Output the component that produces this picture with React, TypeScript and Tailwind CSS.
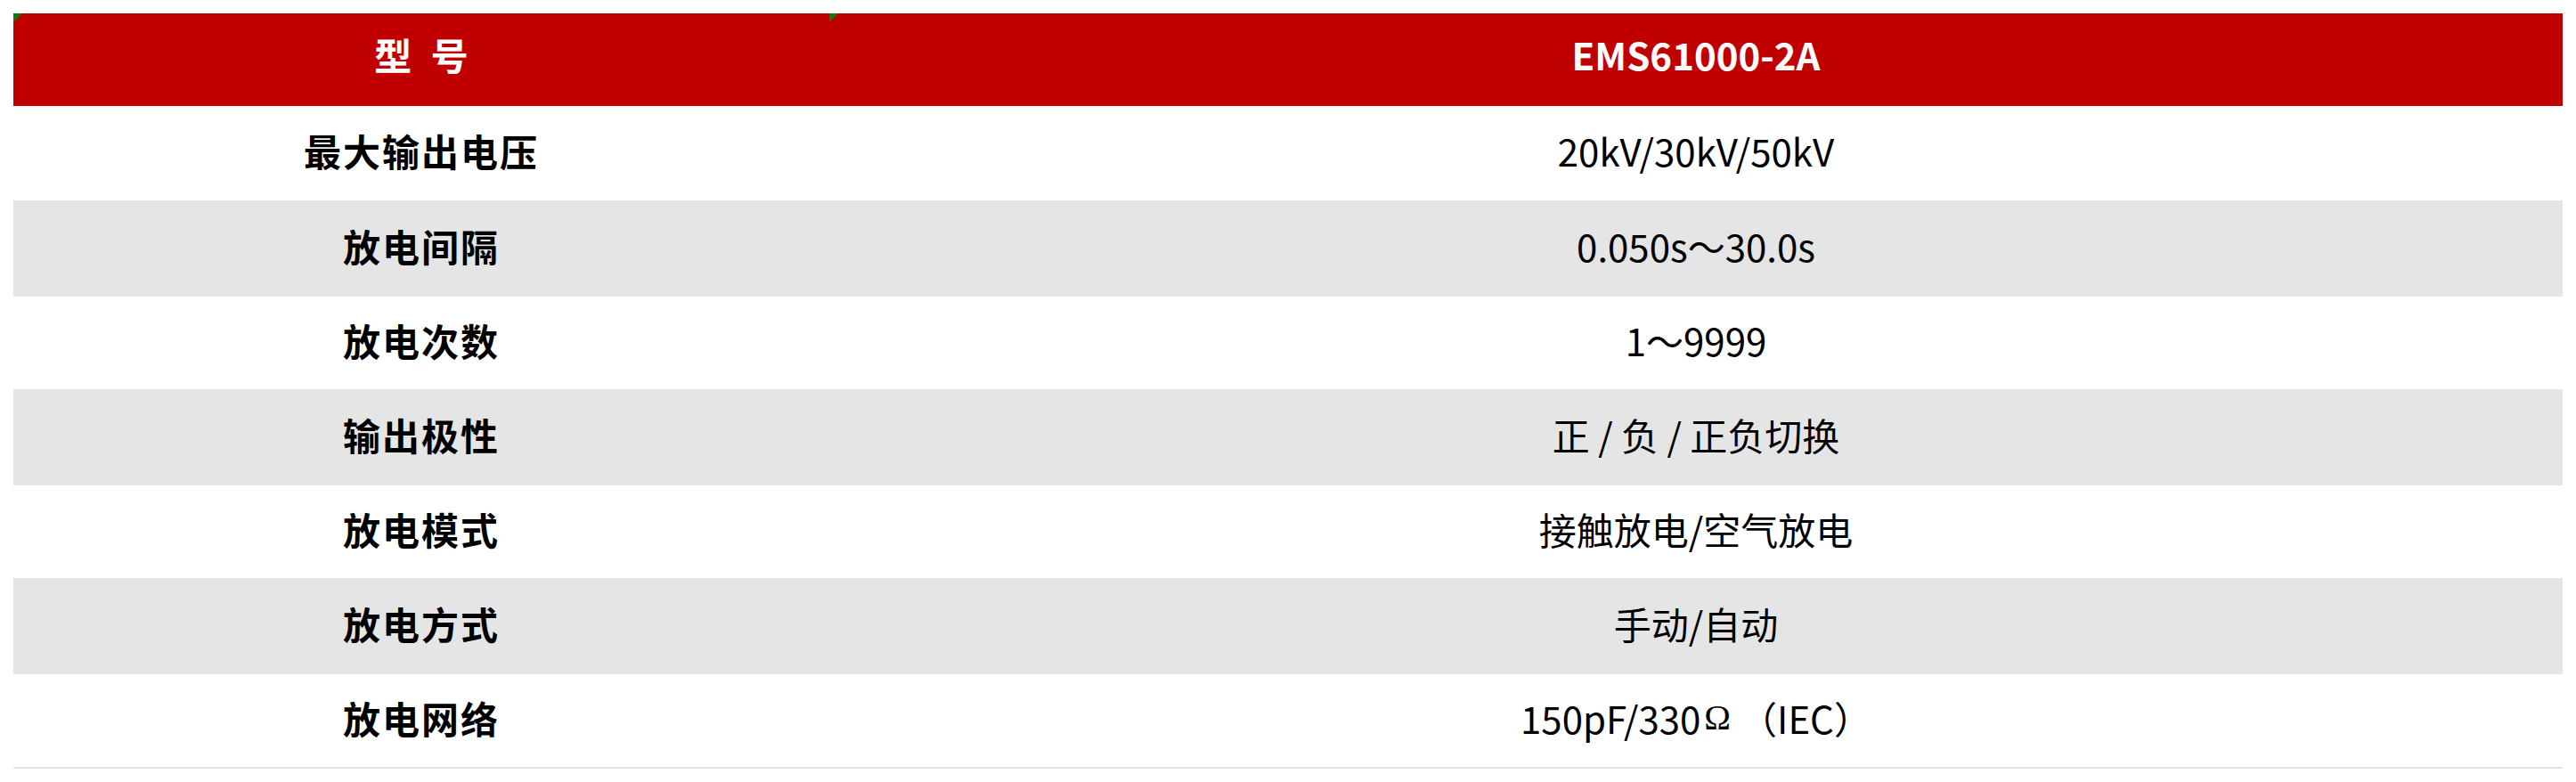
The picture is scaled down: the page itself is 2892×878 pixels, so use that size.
import React from 'react';

const rows: { label: string; value: React.ReactNode; grey: boolean; h: string }[] = [
    { label: '最大输出电压', value: '20kV/30kV/50kV', grey: false, h: 'h-[106px]' },
    { label: '放电间隔', value: '0.050s～30.0s', grey: true, h: 'h-[108px]' },
    { label: '放电次数', value: '1～9999', grey: false, h: 'h-[104px]' },
    { label: '输出极性', value: '正 / 负 / 正负切换', grey: true, h: 'h-[108px]' },
    { label: '放电模式', value: '接触放电/空气放电', grey: false, h: 'h-[104px]' },
    { label: '放电方式', value: '手动/自动', grey: true, h: 'h-[108px]' },
    {
        label: '放电网络',
        value: (
            <>
                150pF/330
                <span className="font-['Liberation_Serif',serif] text-[40px] ml-[4px]">Ω</span>
                <span className="ml-[10px]">（IEC）</span>
            </>
        ),
        grey: false,
        h: 'h-[104px]',
    },
];

function Marker() {
    return (
        <svg className="absolute left-0 top-0" width="10" height="10" viewBox="0 0 10 10">
            <polygon points="0,0 10,0 0,10" fill="#0a7d0a" />
        </svg>
    );
}

export default function App() {
    return (
        <div className="w-full bg-white px-[15px] pt-[15px] font-['Noto_Sans_CJK_SC',sans-serif] text-black">
            {/* Header */}
            <div className="flex h-[104px] bg-[#c00000] text-white font-bold text-[42px]">
                <div className="relative w-[916px] flex items-center justify-center pb-[13px] [word-spacing:12px]">
                    <Marker />
                    型 号
                </div>
                <div className="relative flex-1 flex items-center justify-center pb-[13px]">
                    <Marker />
                    EMS61000-2A
                </div>
            </div>

            {/* Spec rows */}
            {rows.map((r) => (
                <div key={r.label} className={`flex ${r.h} ${r.grey ? 'bg-[#e5e5e5]' : 'bg-white'}`}>
                    <div className="w-[916px] flex items-center justify-center pb-[7px] text-[42px] font-bold tracking-[2px]">
                        {r.label}
                    </div>
                    <div className="flex-1 flex items-center justify-center pb-[7px] text-[42px]">
                        {r.value}
                    </div>
                </div>
            ))}
            <div className="h-[2px] bg-[#e5e5e5]" />
        </div>
    );
}
